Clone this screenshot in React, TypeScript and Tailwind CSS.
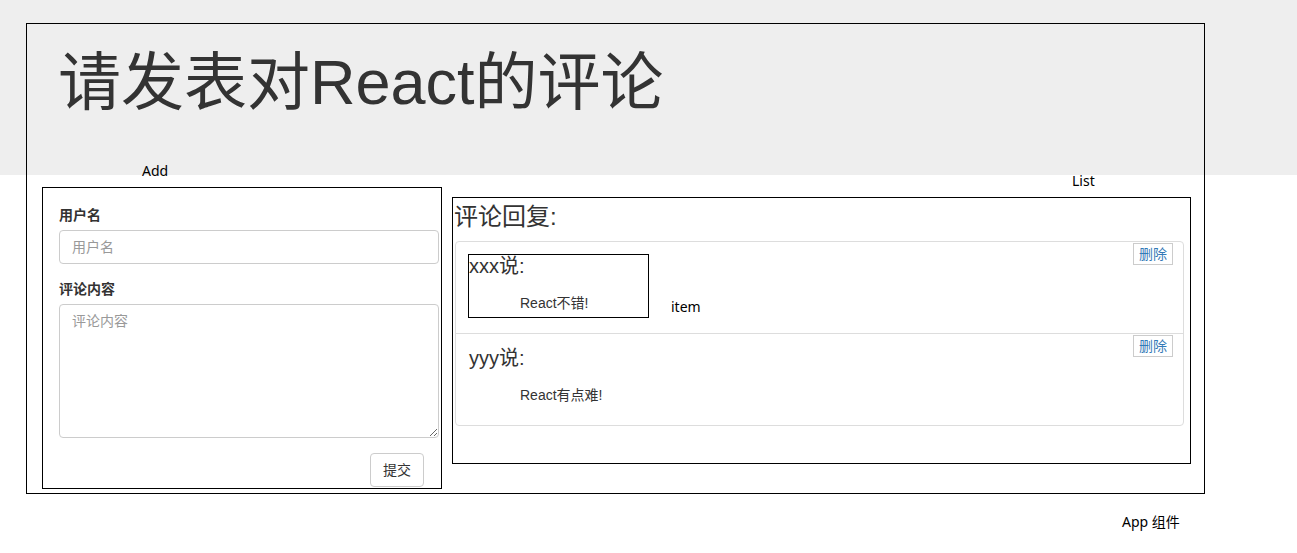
import React from "react";

const sans = { fontFamily: '"Liberation Sans", "Noto Sans CJK SC", sans-serif' };

function Item({ name, text, showItem, outlined }: { name: string; text: string; showItem?: boolean; outlined?: boolean }) {
  return (
    <div className="relative flex items-end pt-[12px] pl-[12px] pb-[15px]">
      <div className={`w-[181px] h-[64px] border ${outlined ? "border-black" : "border-transparent"}`}>
        <div className="text-[20px] leading-[22px] text-[#333]">{name}说:</div>
        <div className="mt-[16px] pl-[51px] text-[14px] leading-[20px] text-[#333]">{text}</div>
      </div>
      {showItem && (
        <span className="ml-[22px] mb-[1px] text-[14px] leading-[20px] text-black font-['Noto_Sans','Noto_Sans_CJK_SC',sans-serif]">
          item
        </span>
      )}
      <button className="absolute top-[1px] right-[10px] w-[40px] h-[22px] border border-[#ccc] bg-white text-[14px] leading-[20px] text-[#337ab7]">
        删除
      </button>
    </div>
  );
}

export default function App() {
  return (
    <div
      className="w-[1297px] min-h-[553px] bg-[linear-gradient(#eeeeee_0px,#eeeeee_175px,#ffffff_175px)] pt-[23px] pl-[26px]"
      style={sans}
    >
      <div className="w-[1179px] h-[471px] border border-black">
        <h1 className="mt-[24px] pl-[31px] text-[63px] leading-[69px] text-[#333] font-normal">请发表对React的评论</h1>
        <div className="flex items-start mt-[42px] ml-[15px]">
          {/* Add column */}
          <div>
            <div className="pt-[2px] pl-[100px] text-[14px] leading-[20px] text-black font-['Noto_Sans','Noto_Sans_CJK_SC',sans-serif]">
              Add
            </div>
            <div className="mt-[6px] w-[400px] h-[302px] border border-black pl-[16px] pt-[17px]">
              <div className="text-[14px] leading-[20px] font-bold text-[#333]">用户名</div>
              <input
                className="mt-[5px] block w-[380px] h-[34px] border border-[#ccc] rounded-[4px] px-[12px] text-[14px] text-[#555] placeholder:text-[#999] bg-white"
                placeholder="用户名"
              />
              <div className="mt-[15px] text-[14px] leading-[20px] font-bold text-[#333]">评论内容</div>
              <textarea
                className="mt-[5px] block w-[380px] h-[134px] border border-[#ccc] rounded-[4px] px-[12px] py-[6px] text-[14px] leading-[20px] text-[#555] placeholder:text-[#999] bg-white"
                placeholder="评论内容"
              />
              <div className="mt-[15px] w-[380px] flex justify-end pr-[15px]">
                <button className="w-[54px] h-[34px] border border-[#ccc] rounded-[4px] bg-white text-[14px] text-[#333]">
                  提交
                </button>
              </div>
            </div>
          </div>
          {/* List column */}
          <div className="ml-[10px] mt-[10px]">
            <div className="pt-[2px] pl-[620px] text-[14px] leading-[20px] text-black font-['Noto_Sans','Noto_Sans_CJK_SC',sans-serif]">
              List
            </div>
            <div className="mt-[6px] w-[739px] h-[267px] border border-black">
              <h2 className="mt-[6px] pl-[1px] text-[24px] leading-[26px] text-[#333] font-normal">评论回复:</h2>
              <div className="mt-[11px] ml-[2px] w-[729px] border border-[#ddd] rounded-[4px]">
                <Item name="xxx" text="React不错!" showItem outlined />
                <div className="border-t border-[#ddd]">
                  <Item name="yyy" text="React有点难!" />
                </div>
              </div>
            </div>
          </div>
        </div>
      </div>
      <div className="mt-[18px] pl-[1096px] text-[14px] leading-[20px] text-black font-['Noto_Sans','Noto_Sans_CJK_SC',sans-serif]">
        App 组件
      </div>
    </div>
  );
}
